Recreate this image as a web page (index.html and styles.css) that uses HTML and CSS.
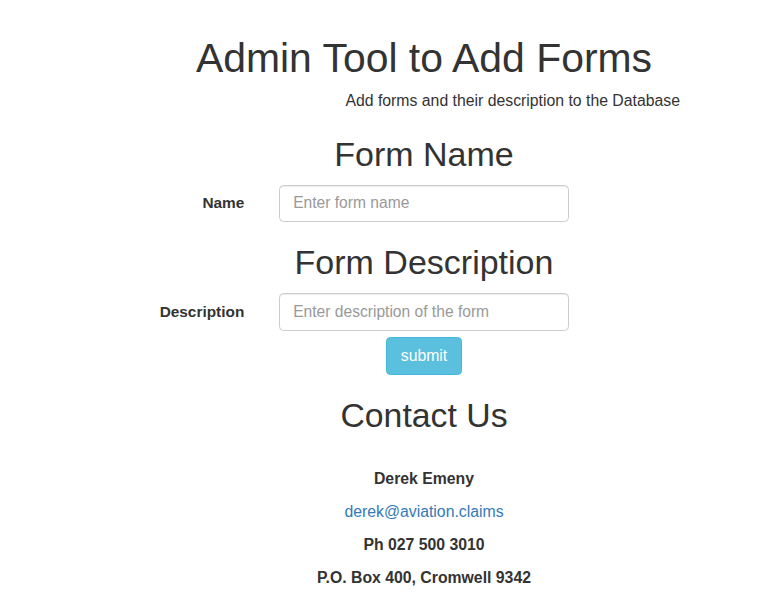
FILE: index.html
```html
<!DOCTYPE html>
<html lang="en">
<head>
<meta charset="utf-8">
<title>Admin Tool to Add Forms</title>
<link rel="stylesheet" href="styles.css">
</head>
<body>
<div class="page">
  <header class="intro">
    <h1 class="intro-title">Admin Tool to Add Forms</h1>
    <p class="intro-sub">Add forms and their description to the Database</p>
  </header>

  <form class="admin-form" onsubmit="return false;">
    <h2 class="section-title section-title--name">Form Name</h2>
    <div class="field">
      <label class="field-label" for="fname">Name</label>
      <input class="field-input" id="fname" type="text" placeholder="Enter form name">
    </div>

    <h2 class="section-title section-title--desc">Form Description</h2>
    <div class="field">
      <label class="field-label" for="fdesc">Description</label>
      <input class="field-input" id="fdesc" type="text" placeholder="Enter description of the form">
    </div>

    <div class="actions">
      <button class="btn-submit" type="submit">submit</button>
    </div>
  </form>

  <section class="contact">
    <h2 class="section-title section-title--contact">Contact Us</h2>
    <p class="contact-line contact-line--first"><strong>Derek Emeny</strong></p>
    <p class="contact-line"><a class="contact-link" href="#">derek@aviation.claims</a></p>
    <p class="contact-line"><strong>Ph 027 500 3010</strong></p>
    <p class="contact-line"><strong>P.O. Box 400, Cromwell 9342</strong></p>
  </section>
</div>
</body>
</html>
```

FILE: styles.css
```css
html, body {
  margin: 0;
  padding: 0;
  background: #fff;
}

body {
  font-family: "Liberation Sans", Arial, Helvetica, sans-serif;
  font-size: 15.4px;
  line-height: 22px;
  color: #333;
}

.page {
  width: 644px;
  margin-left: 102px;
  text-align: center;
}

.intro-title {
  margin: 0;
  padding-top: 36.5px;
  font-size: 40.9px;
  line-height: 43.56px;
  font-weight: 500;
  color: #333;
}

.intro-sub {
  margin: 10px 0 0;
  padding-right: 66px;
  text-align: right;
  font-size: 15.8px;
  line-height: 22px;
}

.admin-form {
  margin: 0;
}

.section-title {
  margin: 0 0 12.5px;
  font-size: 34px;
  line-height: 36.3px;
  font-weight: 500;
  color: #333;
}

.section-title--name {
  padding-top: 23.9px;
}

.section-title--desc {
  padding-top: 22.2px;
}

.section-title--contact {
  padding-top: 22.8px;
  margin-bottom: 34.8px;
  font-size: 33.8px;
}

.field {
  display: grid;
  grid-template-columns: 1fr 290px 1fr;
  column-gap: 34.7px;
  align-items: center;
}

.field-label {
  text-align: right;
  font-weight: bold;
  line-height: 22px;
}

.field-input {
  box-sizing: border-box;
  width: 290px;
  height: 37.4px;
  padding: 6.6px 13.2px;
  font-family: inherit;
  font-size: 15.6px;
  line-height: 22px;
  color: #555;
  background: #fff;
  border: 1px solid #ccc;
  border-radius: 4.4px;
  box-shadow: inset 0 1px 1px rgba(0, 0, 0, 0.075);
  outline: none;
}

.field-input::placeholder {
  color: #999;
  opacity: 1;
}

.actions {
  padding-top: 6.6px;
  display: flex;
  justify-content: center;
}

.btn-submit {
  box-sizing: border-box;
  height: 37.4px;
  padding: 6.6px 13.5px;
  font-family: inherit;
  font-size: 15.8px;
  line-height: 22px;
  color: #fff;
  background: #5bc0de;
  border: 1px solid #46b8da;
  border-radius: 4.4px;
  cursor: pointer;
}

.contact-line {
  margin: 0 0 11px;
  font-size: 15.8px;
  line-height: 22px;
}

.contact-link {
  color: #337ab7;
  text-decoration: none;
}
```
